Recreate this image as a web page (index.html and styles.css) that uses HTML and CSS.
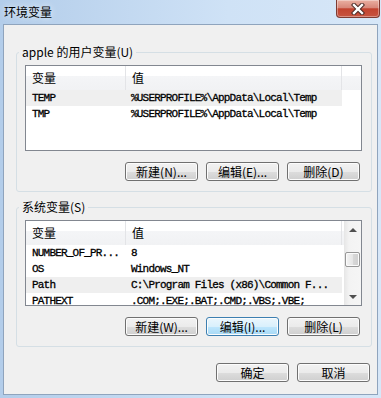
FILE: index.html
```html
<!DOCTYPE html>
<html lang="zh-CN">
<head>
    <meta charset="UTF-8">
    <title>环境变量</title>
    <link rel="stylesheet" href="styles.css">
</head>
<body>

<div class="window">
    <div class="titlebar">
        <span class="title">环境变量</span>
        <button class="close-btn" type="button">
            <svg width="14" height="12" viewBox="0 0 14 12">
                <path d="M3 2 L11 10 M11 2 L3 10" stroke="#4a2a26" stroke-width="4.4" stroke-linecap="square"/>
                <path d="M3 2 L11 10 M11 2 L3 10" stroke="#fff" stroke-width="2.4" stroke-linecap="square"/>
            </svg>
        </button>
    </div>

    <div class="client">
        <fieldset class="group">
            <legend>apple 的用户变量(U)</legend>
            <div class="list">
                <div class="list-main">
                    <div class="list-head">
                        <div class="hcell col-name">变量</div>
                        <div class="hcell col-value">值</div>
                        <div class="hcell col-rest"></div>
                    </div>
                    <div class="row selected">
                        <span class="cell col-name">TEMP</span>
                        <span class="cell col-value">%USERPROFILE%\AppData\Local\Temp</span>
                    </div>
                    <div class="row">
                        <span class="cell col-name">TMP</span>
                        <span class="cell col-value">%USERPROFILE%\AppData\Local\Temp</span>
                    </div>
                </div>
            </div>
            <div class="btn-row">
                <button class="btn" type="button">新建(N)...</button>
                <button class="btn" type="button">编辑(E)...</button>
                <button class="btn" type="button">删除(D)</button>
            </div>
        </fieldset>

        <fieldset class="group">
            <legend>系统变量(S)</legend>
            <div class="list">
                <div class="list-main">
                    <div class="list-head">
                        <div class="hcell col-name">变量</div>
                        <div class="hcell col-value">值</div>
                        <div class="hcell col-rest"></div>
                    </div>
                    <div class="row">
                        <span class="cell col-name">NUMBER_OF_PR...</span>
                        <span class="cell col-value">8</span>
                    </div>
                    <div class="row">
                        <span class="cell col-name">OS</span>
                        <span class="cell col-value">Windows_NT</span>
                    </div>
                    <div class="row selected">
                        <span class="cell col-name">Path</span>
                        <span class="cell col-value">C:\Program Files (x86)\Common F...</span>
                    </div>
                    <div class="row">
                        <span class="cell col-name">PATHEXT</span>
                        <span class="cell col-value">.COM;.EXE;.BAT;.CMD;.VBS;.VBE;</span>
                    </div>
                </div>
                <div class="scrollbar">
                    <div class="sb-btn"><span class="arrow-up"></span></div>
                    <div class="sb-track"><div class="sb-thumb"></div></div>
                    <div class="sb-btn"><span class="arrow-down"></span></div>
                </div>
            </div>
            <div class="btn-row">
                <button class="btn" type="button">新建(W)...</button>
                <button class="btn focused" type="button">编辑(I)...</button>
                <button class="btn" type="button">删除(L)</button>
            </div>
        </fieldset>

        <div class="btn-row dialog-btns">
            <button class="btn" type="button">确定</button>
            <button class="btn" type="button">取消</button>
        </div>
    </div>
</div>

</body>
</html>
```

FILE: styles.css
```css
body {
    margin: 0;
    font-family: "Noto Sans CJK SC", "Liberation Sans", sans-serif;
    font-size: 12px;
    color: #000;
}
.window {
    width: 381px;
    height: 398px;
    display: flex;
    flex-direction: column;
    background: linear-gradient(to right, #b3cdea, #cfe2f6 60%, #d7e7f8);
}
.titlebar {
    height: 24px;
    display: flex;
    align-items: flex-start;
}
.title {
    margin: 5px 0 0 4px;
    line-height: 14px;
    text-shadow: 0 0 6px rgba(255,255,255,0.9);
}
.close-btn {
    margin-left: auto;
    margin-right: 1px;
    width: 44px;
    height: 18px;
    padding: 0;
    border: 1px solid #7e3b32;
    border-top: none;
    border-radius: 0 0 4px 4px;
    background: linear-gradient(#eab0a2, #d8887a 45%, #c2432f 52%, #c75440);
    box-shadow: inset 0 0 0 1px rgba(255,255,255,0.35);
    display: flex;
    align-items: center;
    justify-content: center;
}
.client {
    flex: 1;
    margin: 0 3px 3px;
    background: #f0f0f0;
    border: 1px solid #8fa4bd;
    padding: 0 5px 0 12px;
}
.group {
    margin: 21px 0 0;
    padding: 7px 9px 10px 8px;
    border: 1px solid #d5dfe5;
    border-radius: 3px;
    min-inline-size: 0;
}
.group + .group {
    margin-top: 9px;
}
legend {
    padding: 0 3px;
    margin-left: -6px;
    line-height: 12px;
}
.list {
    height: 86px;
    box-sizing: border-box;
    border: 1px solid #828790;
    background: #fff;
    display: flex;
    overflow: hidden;
}
.list-main {
    flex: 1;
    min-width: 0;
}
.list-head {
    display: flex;
    height: 24px;
    background: linear-gradient(#fff 0%, #fff 42%, #f4f5f7 43%, #f1f2f4 100%);
}
.hcell {
    box-sizing: border-box;
    padding-left: 6px;
    line-height: 23px;
    border-right: 1px solid #e3e4e7;
}
.col-name {
    width: 100px;
    flex-shrink: 0;
}
.col-value {
    width: 216px;
    flex-shrink: 0;
}
.col-rest {
    flex: 1;
    border-right: none;
}
.row {
    display: flex;
    width: 316px;
    height: 16px;
    line-height: 16px;
    font-family: "Liberation Mono", monospace;
    font-size: 11px;
    letter-spacing: -0.8px;
    -webkit-text-stroke: 0.3px #000;
}
.row.selected {
    background: #efefef;
}
.cell {
    box-sizing: border-box;
    padding-left: 6px;
    white-space: nowrap;
    overflow: hidden;
}
.row .col-value {
    padding-left: 5px;
}
.scrollbar {
    width: 17px;
    flex-shrink: 0;
    display: flex;
    flex-direction: column;
    background: linear-gradient(to right, #e6e6e6, #f3f3f3 30%, #f5f5f5);
}
.sb-btn {
    height: 17px;
    display: flex;
    align-items: center;
    justify-content: center;
}
.arrow-up {
    border-left: 4px solid transparent;
    border-right: 4px solid transparent;
    border-bottom: 4px solid #505050;
}
.arrow-down {
    border-left: 4px solid transparent;
    border-right: 4px solid transparent;
    border-top: 4px solid #505050;
}
.sb-track {
    flex: 1;
}
.sb-thumb {
    margin: 14px 0 0 1px;
    width: 15px;
    height: 15px;
    box-sizing: border-box;
    border: 1px solid #979797;
    border-radius: 2px;
    background: linear-gradient(to right, #f4f4f4, #e6e6e6 50%, #d8d8d8 51%, #cfcfcf);
    box-shadow: inset 0 0 0 1px #fbfbfb;
}
.btn-row {
    display: flex;
    justify-content: flex-end;
    gap: 8px;
    margin-top: 11px;
    padding-right: 2px;
}
.btn {
    width: 73px;
    height: 19px;
    box-sizing: border-box;
    padding: 0;
    border: 1px solid #707070;
    border-radius: 3px;
    background: linear-gradient(#f2f2f2, #ebebeb 50%, #dddddd 51%, #cfcfcf);
    box-shadow: inset 0 0 0 1px #fcfcfc;
    font-family: "Noto Sans CJK SC", "Liberation Sans", sans-serif;
    font-size: 12px;
    line-height: 16px;
    color: #000;
}
.btn.focused {
    border-color: #3c7fb1;
    background: linear-gradient(#eaf6fd, #d9f0fc 50%, #bee6fd 51%, #a7d9f5);
}
.dialog-btns {
    margin-top: 16px;
}
```
